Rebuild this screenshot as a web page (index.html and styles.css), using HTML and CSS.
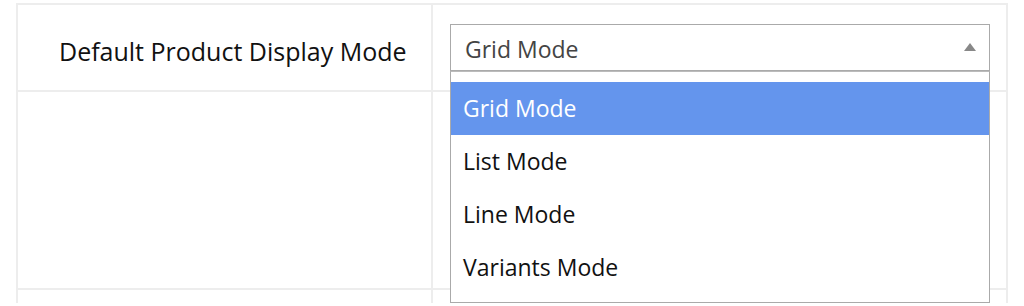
FILE: index.html
```
<!DOCTYPE html>
<html>
  <head>
    <title>Display Settings</title>
    <link rel="stylesheet" href="styles.css">
  </head>
  <body>
    <table class="settings">
      <tr class="row-first">
        <td class="label">Default Product Display Mode</td>
        <td class="field">
          <div class="select">
            <div class="select-box">
              <span class="select-value">Grid Mode</span>
              <span class="arrow"></span>
            </div>
            <ul class="options">
              <li class="active">Grid Mode</li>
              <li>List Mode</li>
              <li>Line Mode</li>
              <li>Variants Mode</li>
            </ul>
          </div>
        </td>
      </tr>
      <tr class="row-second">
        <td class="label"></td>
        <td class="field"></td>
      </tr>
      <tr class="row-third">
        <td class="label"></td>
        <td class="field"></td>
      </tr>
    </table>
  </body>
</html>
```
FILE: styles.css
```
body {
  margin: 0;
  padding: 3px 16px 0 16px;
  font-family: "Open Sans", "Liberation Sans", sans-serif;
  background-color: white;
}
.settings {
  width: 992px;
  border-collapse: collapse;
}
.settings td {
  border: 2px solid #ededed;
  padding: 0;
  vertical-align: middle;
}
.row-first {
  height: 87px;
}
.row-second {
  height: 198px;
}
.row-third {
  height: 14px;
}
.row-third td {
  border-bottom: 0;
}
.label {
  width: 372px;
  padding: 6px 0 0 41px !important;
  font-size: 25px;
  color: #111;
}
.field {
  padding-left: 17px !important;
}
.select {
  position: relative;
  width: 540px;
}
.select-box {
  display: flex;
  align-items: center;
  justify-content: space-between;
  box-sizing: border-box;
  height: 47px;
  padding: 3px 13px 0 14px;
  border: 1px solid #aaa;
  font-size: 23px;
  color: #444;
}
.arrow {
  width: 0;
  height: 0;
  border-left: 6px solid transparent;
  border-right: 6px solid transparent;
  border-bottom: 8px solid #888;
  margin-top: -4px;
}
.options {
  position: absolute;
  top: 47px;
  left: 0;
  right: 0;
  margin: 0;
  padding: 10px 0 8px 0;
  list-style: none;
  background-color: white;
  border: 1px solid #aaa;
  border-top-color: #bbb;
  z-index: 2;
}
.options li {
  height: 53px;
  line-height: 53px;
  padding-left: 12px;
  font-size: 23px;
  color: #111;
}
.options li.active {
  background-color: #6495ed;
  color: white;
}
```
